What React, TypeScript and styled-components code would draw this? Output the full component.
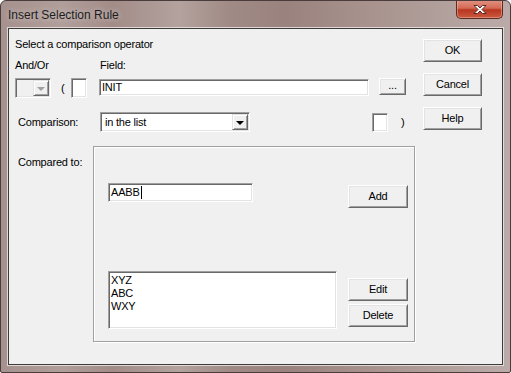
import React from 'react'
import styled, { createGlobalStyle } from 'styled-components'

const GlobalStyle = createGlobalStyle`
  body {
    margin: 0;
    background: #ffffff;
    font-family: "Liberation Sans", Arial, sans-serif;
  }
`

export default function App() {
  return (
    <>
      <GlobalStyle />
      <Window>
        <TitleBar>
          <Title>Insert Selection Rule</Title>
          <CloseButton aria-label="close">
            <svg width="16" height="11" viewBox="0 0 16 11">
              <path
                d="M2 1.5 L5.5 1.5 L8 4 L10.5 1.5 L14 1.5 L10 5.5 L14 9.5 L10.5 9.5 L8 7 L5.5 9.5 L2 9.5 L6 5.5 Z"
                fill="#ffffff"
                stroke="#5a2a22"
                strokeWidth="1"
                strokeLinejoin="round"
              />
            </svg>
          </CloseButton>
        </TitleBar>

        <Client>
          <LeftPane>
            <Heading>Select a comparison operator</Heading>

            <LabelRow>
              <Label $w={85}>And/Or</Label>
              <Label>Field:</Label>
            </LabelRow>

            <ControlRow>
              <Combo $w={36} $h={20} $disabled>
                <ComboValue />
                <DropButton $disabled><Arrow $disabled /></DropButton>
              </Combo>
              <Paren $w={10} $ml={10}>(</Paren>
              <Field $w={16} $h={20} />
              <Field $w={270} $h={17} $ml={12} $mt={1}>INIT</Field>
              <Button $w={27} $h={17} $ml={10} $ellipsis>...</Button>
            </ControlRow>

            <ComparisonRow>
              <Label $w={85} $pl={3}>Comparison:</Label>
              <Combo $w={150} $h={20}>
                <ComboValue>in the list</ComboValue>
                <DropButton><Arrow /></DropButton>
              </Combo>
              <Field $w={16} $h={19} $ml={122} />
              <Paren $ml={13}>)</Paren>
            </ComparisonRow>

            <CompareSection>
              <SectionLabel>Compared to:</SectionLabel>
              <GroupBox>
                <Field $w={145} $h={19}>AABB<Caret /></Field>
                <Button $w={60} $h={23} $mt={2}>Add</Button>
                <ListBox>
                  <div>XYZ</div>
                  <div>ABC</div>
                  <div>WXY</div>
                </ListBox>
                <ButtonStack>
                  <Button $w={60} $h={23}>Edit</Button>
                  <Button $w={60} $h={23}>Delete</Button>
                </ButtonStack>
              </GroupBox>
            </CompareSection>
          </LeftPane>

          <RightPane>
            <Button $w={59} $h={23}>OK</Button>
            <Button $w={59} $h={23}>Cancel</Button>
            <Button $w={59} $h={23}>Help</Button>
          </RightPane>
        </Client>
      </Window>
    </>
  )
}

const Window = styled.div`
  width: 511px;
  height: 373px;
  box-sizing: border-box;
  display: flex;
  flex-direction: column;
  border: 1px solid #4a3c3a;
  border-radius: 6px 6px 2px 2px;
  background:
    linear-gradient(90deg,
      #a5918d 0%, #b09e9a 12%, #a28c88 22%, #b3a29e 35%,
      #a08a85 45%, #9a837e 56%, #a6908b 70%, #b09e9a 85%, #bbaba8 100%);
  overflow: hidden;
`

const TitleBar = styled.div`
  height: 26px;
  display: flex;
  justify-content: space-between;
  align-items: flex-start;
  padding-left: 7px;
  padding-right: 7px;
`

const Title = styled.div`
  font-family: "Liberation Sans", Arial, sans-serif;
  font-size: 12px;
  line-height: 16px;
  margin-top: 6px;
  color: #1c1c1c;
  text-shadow: 0 0 6px rgba(255, 255, 255, 0.6);
`

const CloseButton = styled.div`
  width: 47px;
  height: 19px;
  box-sizing: border-box;
  margin-top: -1px;
  display: flex;
  align-items: center;
  justify-content: center;
  border: 1px solid #5e2a22;
  border-top: none;
  border-radius: 0 0 5px 5px;
  background: linear-gradient(180deg, #e09484 0%, #d46a55 45%, #b8361f 55%, #c95a3f 100%);
  box-shadow: inset 0 0 0 1px rgba(255, 210, 200, 0.4);
`

const Client = styled.div`
  flex: 1;
  margin: 1px 7px 7px 7px;
  display: flex;
  background: #f0f0f0;
  border: 1px solid #3c3c3c;
  box-shadow: 0 0 0 1px rgba(240, 232, 230, 0.8);
  font-family: "Liberation Sans", Arial, sans-serif;
  font-size: 11px;
  line-height: 13px;
  letter-spacing: -0.2px;
  color: #000;
`

const LeftPane = styled.div`
  width: 400px;
  padding: 9px 0 0 6px;
  display: flex;
  flex-direction: column;
`

const RightPane = styled.div`
  margin-left: 8px;
  padding-top: 10px;
  display: flex;
  flex-direction: column;
  gap: 11px;
`

const Heading = styled.div`
  height: 13px;
`

const LabelRow = styled.div`
  display: flex;
  margin-top: 8px;
  height: 13px;
`

const Label = styled.div<{ $w?: number; $pl?: number }>`
  width: ${p => (p.$w ? `${p.$w}px` : 'auto')};
  padding-left: ${p => p.$pl || 0}px;
  box-sizing: border-box;
  align-self: center;
  white-space: nowrap;
`

const ControlRow = styled.div`
  display: flex;
  align-items: flex-start;
  margin-top: 6px;
  height: 20px;
`

const ComparisonRow = styled.div`
  display: flex;
  align-items: center;
  margin-top: 14px;
  height: 20px;
`

const Paren = styled.div<{ $w?: number; $ml?: number }>`
  width: ${p => (p.$w ? `${p.$w}px` : 'auto')};
  margin-left: ${p => p.$ml || 0}px;
  align-self: center;
`

const Field = styled.div<{ $w: number; $h: number; $ml?: number; $mt?: number }>`
  width: ${p => p.$w}px;
  height: ${p => p.$h}px;
  margin-left: ${p => p.$ml || 0}px;
  margin-top: ${p => p.$mt || 0}px;
  box-sizing: border-box;
  background: #ffffff;
  border-top: 1px solid #a0a0a0;
  border-left: 1px solid #a0a0a0;
  border-right: 1px solid #ffffff;
  border-bottom: 1px solid #ffffff;
  box-shadow: inset 1px 1px 0 #696969, inset -1px -1px 0 #e3e3e3;
  padding: 0 2px;
  display: flex;
  align-items: center;
  white-space: nowrap;
`

const Caret = styled.span`
  display: inline-block;
  width: 1px;
  height: 13px;
  background: #000;
  margin-left: 1px;
`

const Combo = styled.div<{ $w: number; $h: number; $disabled?: boolean }>`
  width: ${p => p.$w}px;
  height: ${p => p.$h}px;
  box-sizing: border-box;
  display: flex;
  align-items: stretch;
  background: ${p => (p.$disabled ? '#f0f0f0' : '#ffffff')};
  border-top: 1px solid #a0a0a0;
  border-left: 1px solid #a0a0a0;
  border-right: 1px solid #ffffff;
  border-bottom: 1px solid #ffffff;
  box-shadow: inset 1px 1px 0 #696969, inset -1px -1px 0 #e3e3e3;
  padding: 1px;
`

const ComboValue = styled.div`
  flex: 1;
  padding-left: 3px;
  display: flex;
  align-items: center;
  white-space: nowrap;
`

const DropButton = styled.div<{ $disabled?: boolean }>`
  width: 16px;
  box-sizing: border-box;
  display: flex;
  align-items: center;
  justify-content: center;
  background: #f0f0f0;
  border-top: 1px solid #e3e3e3;
  border-left: 1px solid #e3e3e3;
  border-right: 1px solid #696969;
  border-bottom: 1px solid #696969;
  box-shadow: inset 1px 1px 0 #ffffff, inset -1px -1px 0 #a0a0a0;
`

const Arrow = styled.div<{ $disabled?: boolean }>`
  width: 0;
  height: 0;
  border-left: 4px solid transparent;
  border-right: 4px solid transparent;
  border-top: 4px solid ${p => (p.$disabled ? '#a0a0a0' : '#000000')};
  margin-top: 1px;
`

const Button = styled.div<{ $w: number; $h: number; $ml?: number; $mt?: number; $ellipsis?: boolean }>`
  width: ${p => p.$w}px;
  height: ${p => p.$h}px;
  margin-left: ${p => p.$ml || 0}px;
  margin-top: ${p => p.$mt || 0}px;
  box-sizing: border-box;
  display: flex;
  align-items: ${p => (p.$ellipsis ? 'flex-end' : 'center')};
  padding-bottom: ${p => (p.$ellipsis ? 2 : 0)}px;
  justify-content: center;
  background: #f0f0f0;
  border-top: 1px solid #ffffff;
  border-left: 1px solid #ffffff;
  border-right: 1px solid #696969;
  border-bottom: 1px solid #696969;
  box-shadow: inset 1px 1px 0 #e3e3e3, inset -1px -1px 0 #a0a0a0;
  white-space: nowrap;
  cursor: default;
`

const CompareSection = styled.div`
  display: flex;
  margin-top: 14px;
`

const SectionLabel = styled.div`
  width: 78px;
  padding: 10px 0 0 3px;
  box-sizing: border-box;
`

const GroupBox = styled.div`
  width: 322px;
  height: 196px;
  box-sizing: border-box;
  border: 1px solid #a0a0a0;
  box-shadow: inset 1px 1px 0 #ffffff, 1px 1px 0 #ffffff;
  padding: 36px 0 0 14px;
  display: grid;
  grid-template-columns: 240px 60px;
  grid-template-rows: 25px auto;
  row-gap: 63px;
  align-items: start;
`

const ListBox = styled.div`
  width: 229px;
  height: 58px;
  box-sizing: border-box;
  background: #ffffff;
  border-top: 1px solid #a0a0a0;
  border-left: 1px solid #a0a0a0;
  border-right: 1px solid #ffffff;
  border-bottom: 1px solid #ffffff;
  box-shadow: inset 1px 1px 0 #696969, inset -1px -1px 0 #e3e3e3;
  padding: 2px 2px;
`

const ButtonStack = styled.div`
  display: flex;
  flex-direction: column;
  gap: 3px;
  margin-top: 7px;
`
